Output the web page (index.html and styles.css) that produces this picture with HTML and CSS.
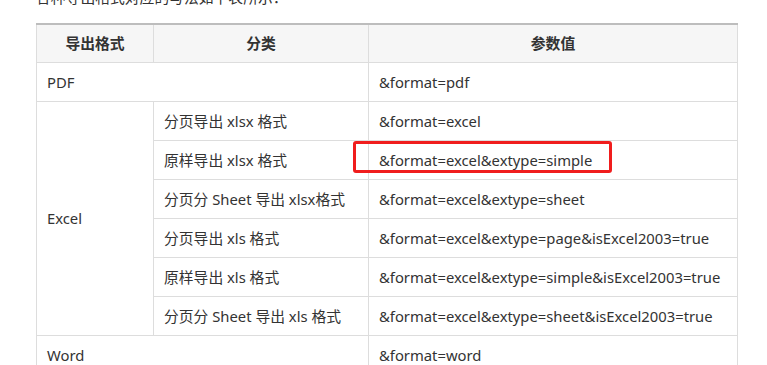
FILE: index.html
```html
<!DOCTYPE html>
<html lang="zh-CN">
<head>
  <meta charset="UTF-8">
  <meta name="viewport" content="width=device-width, initial-scale=1.0">
  <title>导出格式参数</title>
  <link rel="stylesheet" href="styles.css">
</head>
<body>
  <div class="doc">
    <p class="intro">各种导出格式对应的写法如下表所示：</p>

    <table class="params">
      <thead>
        <tr>
          <th class="col-type">导出格式</th>
          <th class="col-kind">分类</th>
          <th>参数值</th>
        </tr>
      </thead>
      <tbody>
        <tr>
          <td colspan="2">PDF</td>
          <td>&amp;format=pdf</td>
        </tr>
        <tr>
          <td rowspan="6">Excel</td>
          <td>分页导出 xlsx 格式</td>
          <td>&amp;format=excel</td>
        </tr>
        <tr>
          <td>原样导出 xlsx 格式</td>
          <td class="marked"><span class="mark"></span>&amp;format=excel&amp;extype=simple</td>
        </tr>
        <tr>
          <td>分页分 Sheet 导出 xlsx格式</td>
          <td>&amp;format=excel&amp;extype=sheet</td>
        </tr>
        <tr>
          <td>分页导出 xls 格式</td>
          <td>&amp;format=excel&amp;extype=page&amp;isExcel2003=true</td>
        </tr>
        <tr>
          <td>原样导出 xls 格式</td>
          <td>&amp;format=excel&amp;extype=simple&amp;isExcel2003=true</td>
        </tr>
        <tr>
          <td>分页分 Sheet 导出 xls 格式</td>
          <td>&amp;format=excel&amp;extype=sheet&amp;isExcel2003=true</td>
        </tr>
        <tr>
          <td colspan="2">Word</td>
          <td>&amp;format=word</td>
        </tr>
      </tbody>
    </table>
  </div>
</body>
</html>
```

FILE: styles.css
```css
* {
  box-sizing: border-box;
}
body {
  margin: 0;
  background: #fff;
  color: #333;
  font-family: "Noto Sans", "Noto Sans CJK SC", sans-serif;
  font-size: 14.8px;
}
.doc {
  padding: 0 29px 0 36px;
  margin-top: -13px;
}
.intro {
  margin: 0 0 16px;
  line-height: 20px;
}
.params {
  width: 702px;
  border-collapse: collapse;
  border-top: 2px solid #bdbdbd;
}
.params th,
.params td {
  border: 1px solid #ddd;
  height: 39px;
  padding: 0 10px;
  text-align: left;
  font-weight: normal;
  line-height: 20px;
}
.params th {
  background: #f6f6f6;
  text-align: center;
  font-weight: bold;
  height: 38px;
}
.params tr:first-child th {
  border-top: none;
}
.col-type {
  width: 117px;
}
.col-kind {
  width: 215px;
}
.marked {
  position: relative;
}
/* red highlight frame over the value cell */
.mark {
  position: absolute;
  left: -16px;
  top: 0;
  width: 259px;
  height: 32px;
  border: 3px solid #f01d1d;
  border-radius: 3px;
}
```
